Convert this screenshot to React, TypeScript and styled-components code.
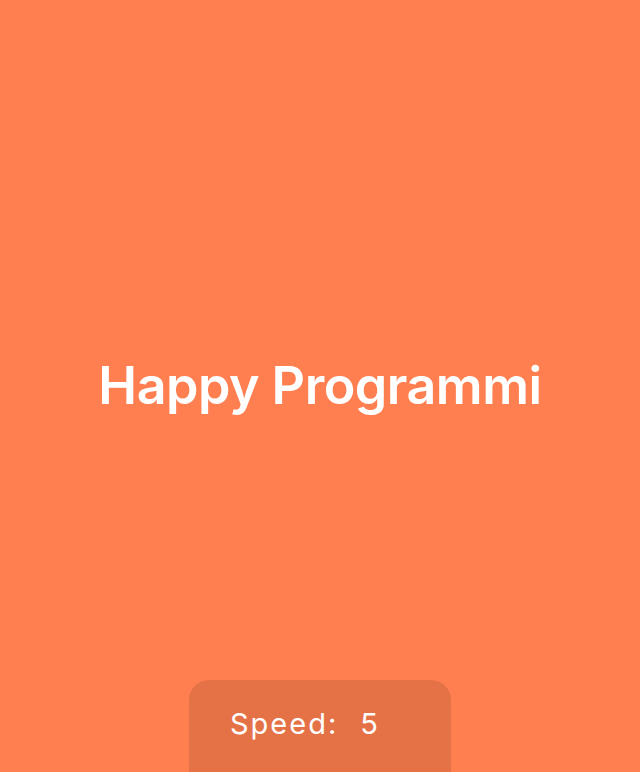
import React from "react";
import styled, { createGlobalStyle } from "styled-components";

const Global = createGlobalStyle`
  html, body { margin: 0; padding: 0; }
  body {
    background: #ff7f50;
    font-family: "Inter", "Open Sans", sans-serif;
    overflow: hidden;
  }
`;

const Page = styled.main`
  height: 772px;
  display: flex;
  flex-direction: column;
  align-items: center;
  justify-content: center;
  position: relative;
`;

const Title = styled.h1`
  margin: 0;
  color: #ffffff;
  font-size: 52px;
  font-weight: 600;
  letter-spacing: -0.5px;
  line-height: 1.2;
`;

const Panel = styled.div`
  position: absolute;
  bottom: 0;
  left: 50%;
  transform: translateX(-50%);
  width: 262px;
  height: 92px;
  box-sizing: border-box;
  background: rgba(0, 0, 0, 0.1);
  border-radius: 20px 20px 0 0;
  padding: 26px 0 0 41px;
  display: flex;
  align-items: flex-start;
  gap: 22px;
  color: #ffffff;
  font-size: 29px;
  font-weight: 400;
  letter-spacing: 2px;
`;

const Label = styled.span``;
const Value = styled.span``;

export default function App() {
  return (
    <>
      <Global />
      <Page>
        <Title>Happy Programmi</Title>
        <Panel>
          <Label>Speed:</Label>
          <Value>5</Value>
        </Panel>
      </Page>
    </>
  );
}
